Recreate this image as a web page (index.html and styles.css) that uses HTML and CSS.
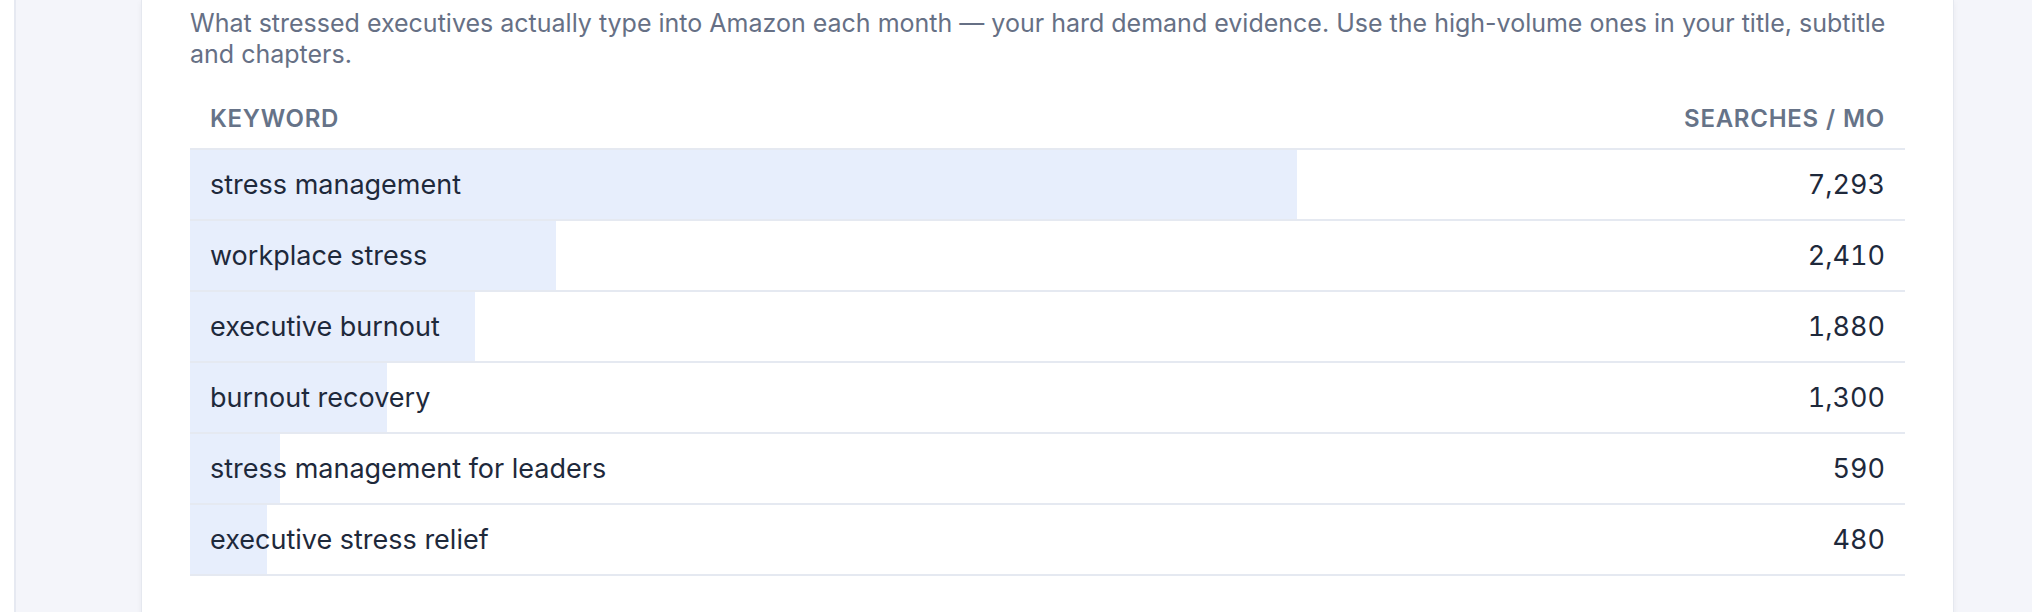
FILE: index.html
```html
<!DOCTYPE html>
<html lang="en">
  <head>
    <meta charset="UTF-8" />
    <meta name="viewport" content="width=device-width, initial-scale=1.0" />
    <title>Keyword Demand</title>
    <link rel="stylesheet" href="styles.css">
  </head>
  <body>
    <div class="page">
      <div class="main">
        <div class="card">
          <p class="intro">
            What stressed executives actually type into Amazon each month — your hard demand evidence. Use the high-volume ones in your title, subtitle and chapters.
          </p>

          <table class="kw-table">
            <thead>
              <tr>
                <th class="kw-col">Keyword</th>
                <th class="num">Searches / mo</th>
              </tr>
            </thead>
            <tbody>
              <tr>
                <td class="kw"><span class="bar" style="width: 100%"></span><span class="label">stress management</span></td>
                <td class="num">7,293</td>
              </tr>
              <tr>
                <td class="kw"><span class="bar" style="width: 33.05%"></span><span class="label">workplace stress</span></td>
                <td class="num">2,410</td>
              </tr>
              <tr>
                <td class="kw"><span class="bar" style="width: 25.78%"></span><span class="label">executive burnout</span></td>
                <td class="num">1,880</td>
              </tr>
              <tr>
                <td class="kw"><span class="bar" style="width: 17.83%"></span><span class="label">burnout recovery</span></td>
                <td class="num">1,300</td>
              </tr>
              <tr>
                <td class="kw"><span class="bar" style="width: 8.09%"></span><span class="label">stress management for leaders</span></td>
                <td class="num">590</td>
              </tr>
              <tr>
                <td class="kw"><span class="bar" style="width: 7%"></span><span class="label">executive stress relief</span></td>
                <td class="num">480</td>
              </tr>
            </tbody>
          </table>
        </div>
      </div>
    </div>
  </body>
</html>
```

FILE: styles.css
```css
* {
  margin: 0;
  padding: 0;
  box-sizing: border-box;
}

body {
  font-family: Inter, "Noto Sans", sans-serif;
  background: #ffffff;
  color: #1e293b;
  overflow: hidden;
}

.page {
  padding-left: 14px;
  min-height: 100vh;
}

.main {
  min-height: 100vh;
  background: #f4f5fa;
  border-left: 2px solid #e6e9f1;
  padding: 0 78px 0 125px;
}

.card {
  background: #ffffff;
  border: 1px solid #e5e8ef;
  border-top: none;
  box-shadow: 0 2px 6px rgba(30, 41, 59, 0.05);
  padding: 8px 48px 40px;
  min-height: 100vh;
}

.intro {
  font-size: 25px;
  line-height: 31px;
  color: #667085;
}

.kw-table {
  width: 100%;
  border-collapse: collapse;
  margin-top: 24px;
}

.kw-table th {
  font-size: 24px;
  line-height: 30px;
  font-weight: 600;
  letter-spacing: 0.03em;
  text-transform: uppercase;
  color: #667388;
  text-align: left;
  padding: 10px 20px 14px;
  border-bottom: 2px solid #e5e9f1;
}

.kw-table th.kw-col {
  width: 1107px;
}

.kw-table td {
  font-size: 27px;
  line-height: 37px;
  padding: 16px 20px;
  border-bottom: 2px solid #e5e9f1;
}

.kw-table .num {
  text-align: right;
  font-variant-numeric: tabular-nums;
}

.kw {
  position: relative;
}

.bar {
  position: absolute;
  top: 0;
  left: 0;
  bottom: 0;
  background: #e7eefc;
}

.label {
  position: relative;
}
```
